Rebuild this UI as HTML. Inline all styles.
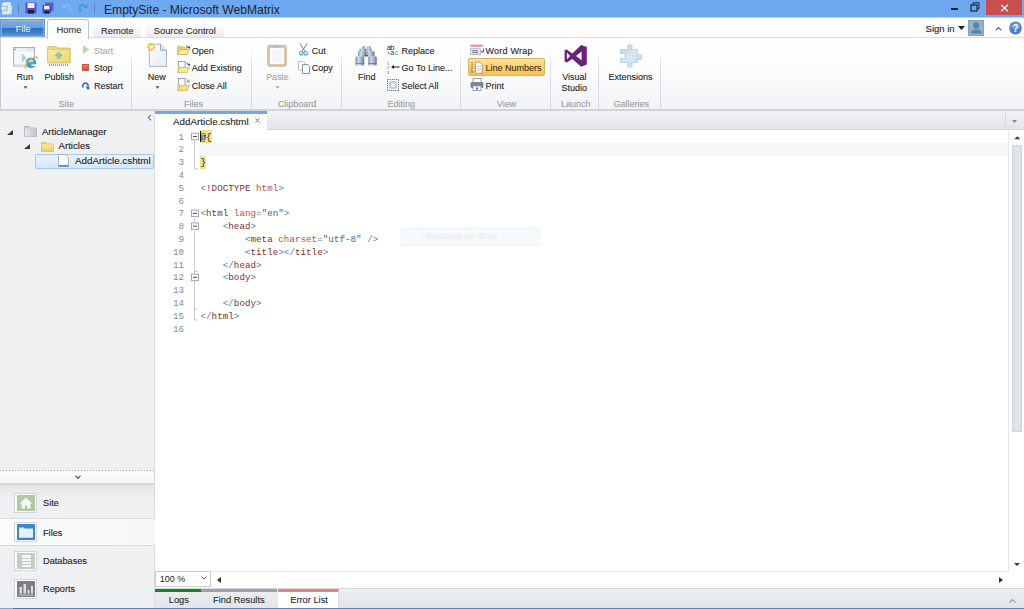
<!DOCTYPE html>
<html><head><meta charset="utf-8">
<style>
*{box-sizing:border-box}
html,body{margin:0;padding:0}
body{width:1024px;height:609px;overflow:hidden;position:relative;background:#fff;font-family:"Liberation Sans",sans-serif;color:#3b3b3b}
.a{position:absolute}
.t{position:absolute;white-space:nowrap;line-height:1}
svg{position:absolute;overflow:visible}
#title{left:0;top:0;width:1024px;height:19px;background:linear-gradient(#6ea8f0 0,#6ea8f0 17px,#a9c9f2 17px,#d9e7f8 19px)}
#tabrow{left:0;top:18px;width:1024px;height:20px;background:#fff}
#ribbon{left:0;top:37px;width:1024px;height:74px;background:linear-gradient(#fff 0%,#fcfcfd 45%,#f2f3f5 100%);border-top:1px solid #d9dcdf;border-bottom:2px solid #d0d3d7;border-left:1px solid #c9ccd1}
.sep{position:absolute;top:50px;width:1px;height:59px;background:linear-gradient(rgba(215,218,222,0),#dcdfe2 25%,#d6d9dd)}
.gl{position:absolute;top:100.2px;font-size:9px;color:#a0a3a7;-webkit-text-stroke:.15px currentColor;white-space:nowrap;line-height:1}
.rl{position:absolute;font-size:9px;color:#262626;-webkit-text-stroke:.1px currentColor;white-space:nowrap;line-height:1}
#left{left:0;top:111px;width:155px;height:497px;background:#eff0f2;border-right:1px solid #d8dadd}
#editor{left:155px;top:111px;width:869px;height:497px;background:#fff}
.code{position:absolute;left:200.5px;letter-spacing:.04px;font-family:"Liberation Mono",monospace;font-size:9.2px;line-height:12.8px;white-space:pre;color:#3b3b3b}
.ln{position:absolute;left:154px;font-family:"Liberation Mono",monospace;font-size:9.2px;line-height:12.8px;color:#7f8e9b;text-align:right;width:30px;white-space:pre}
.b{color:#4f7fc0}.n{color:#80302a}.at{color:#cc4c2c}.v{color:#3765ab}
.nav{position:absolute;left:14px;width:23px;height:20px;background:#fff;border:1px solid #d3d6da}
.navt{position:absolute;left:43px;font-size:9.2px;color:#222;-webkit-text-stroke:.1px currentColor;white-space:nowrap;line-height:1}
</style></head><body>

<!-- ============ Title bar ============ -->
<div id="title" class="a"></div>
<!-- app icon -->
<svg style="left:1px;top:2px" width="12" height="13" viewBox="0 0 12 13">
  <path d="M1 1.2Q1 0.4 2.5 0.4H9Q10 0.4 10 1.5V3.6L11 4V7.8L10.5 8.2V11.5Q10 12.6 8 12.6H3Q1 12.6 1 11.4V8.6L0.5 8V4.5L1 4.2z" fill="#dbe9ee"/>
  <path d="M1 4.5h6M1.5 8.3h5M6 4.5v4" stroke="#a6c0cf" stroke-width="1.2" fill="none"/>
  <path d="M2 1.2h7" stroke="#f4f9fb" stroke-width="1"/>
</svg>
<div class="a" style="left:18px;top:3px;width:2px;height:11px;background:linear-gradient(90deg,#5779ad,#8fb0d8)"></div>
<!-- save -->
<svg style="left:25px;top:2px" width="12" height="12" viewBox="0 0 12 12">
  <rect x="0.5" y="0.5" width="11" height="11" rx="1" fill="#5252c4"/>
  <rect x="2.5" y="1" width="7" height="5" fill="#eef0ff"/>
  <rect x="3" y="8" width="6" height="3.5" fill="#1c1c3a"/>
</svg>
<svg style="left:42px;top:2px" width="12" height="12" viewBox="0 0 12 12">
  <rect x="3" y="0.5" width="8.5" height="8.5" rx="1" fill="#5a5acc"/>
  <rect x="0.5" y="3" width="8.5" height="8.5" rx="1" fill="#4848b8"/>
  <rect x="2" y="3.8" width="5.5" height="3.5" fill="#eef0ff"/>
  <rect x="2.5" y="9" width="4.5" height="2.5" fill="#1c1c3a"/>
</svg>
<svg style="left:62px;top:3px" width="10" height="10" viewBox="0 0 10 10">
  <path d="M7 9 C10 6 8 1 4.5 2 L2 4" fill="none" stroke="#8cb6e6" stroke-width="1.6"/>
  <path d="M0.5 1v4h4z" fill="#8cb6e6"/>
</svg>
<svg style="left:78px;top:3px" width="10" height="10" viewBox="0 0 10 10">
  <path d="M3 9 C0 6 2 1 5.5 2 L8 4" fill="none" stroke="#3a9ad0" stroke-width="1.6"/>
  <path d="M9.5 1v4h-4z" fill="#3a9ad0"/>
</svg>
<div class="a" style="left:94px;top:3px;width:2px;height:11px;background:linear-gradient(90deg,#5779ad,#8fb0d8)"></div>
<div class="t" style="left:104px;top:4.3px;font-size:12.1px;color:#1c2633">EmptySite - Microsoft WebMatrix</div>
<!-- window controls -->
<div class="a" style="left:951px;top:8px;width:7px;height:2px;background:#1a2230"></div>
<svg style="left:970px;top:2px" width="10" height="10" viewBox="0 0 10 10">
  <rect x="1" y="3" width="6" height="6" fill="none" stroke="#1a2230" stroke-width="1.2"/>
  <path d="M3 2.5V0.8h6v6H7.5" fill="none" stroke="#1a2230" stroke-width="1"/>
</svg>
<div class="a" style="left:986px;top:0;width:36px;height:15px;background:#c94f4c"></div>
<svg style="left:1000px;top:4px" width="9" height="8" viewBox="0 0 9 8">
  <path d="M1.2 0.8l6.6 6.4M7.8 0.8L1.2 7.2" stroke="#fff" stroke-width="1.2"/>
</svg>

<!-- ============ Tab row ============ -->
<div id="tabrow" class="a"></div>
<div class="a" style="left:0;top:37px;width:1024px;height:1px;background:#d5d8dc"></div>
<div class="a" style="left:0;top:19px;width:45px;height:19px;background:linear-gradient(#80ade0 0%,#6a9ed9 45%,#2f72c1 50%,#3f7fc8 75%,#6ea2da 100%);border:1px solid #5f95d2;box-shadow:inset 0 0 0 1px rgba(170,200,235,.55)"></div>
<div class="t" style="left:15.8px;top:25.1px;font-size:9.2px;color:#f2f6fb">File</div>
<div class="a" style="left:93px;top:20px;width:48px;height:17px;background:linear-gradient(#fff 25%,#e9ebee)"></div>
<div class="a" style="left:146px;top:20px;width:78px;height:17px;background:linear-gradient(#fff 25%,#e9ebee)"></div>
<div class="a" style="left:47px;top:19px;width:42px;height:20px;background:#fff;border:1px solid #bfc3c8;border-bottom:none;border-radius:3px 3px 0 0;z-index:2"></div>
<div class="t" style="left:56.5px;top:26.4px;font-size:9.3px;color:#2e2e2e;-webkit-text-stroke:.1px currentColor;z-index:3">Home</div>
<div class="t" style="left:101px;top:26.5px;font-size:9.3px;color:#2e2e2e;-webkit-text-stroke:.1px currentColor">Remote</div>
<div class="t" style="left:153.8px;top:26.6px;font-size:9.3px;color:#2e2e2e;-webkit-text-stroke:.1px currentColor">Source Control</div>
<!-- sign in -->
<div class="t" style="left:925.6px;top:23.5px;font-size:9.5px;color:#2a2a2a;-webkit-text-stroke:.15px currentColor">Sign in</div>
<svg style="left:958px;top:26px" width="7" height="4" viewBox="0 0 7 4"><path d="M0 0h7L3.5 4z" fill="#222"/></svg>
<div class="a" style="left:968px;top:20px;width:16px;height:16px;background:#93b4ca;border:1px solid #7fa3bb"></div>
<svg style="left:969px;top:21px" width="14" height="14" viewBox="0 0 14 14">
  <ellipse cx="7.2" cy="4.6" rx="3.2" ry="3.4" fill="#5b86a6"/>
  <path d="M1.8 12.6C1.8 9.6 3.8 8.4 7.2 8.4S12.6 9.6 12.6 12.6z" fill="#5b86a6"/>
</svg>
<svg style="left:995px;top:26px" width="7" height="5" viewBox="0 0 7 5"><path d="M0.7 4.2L3.5 1.5 6.3 4.2" fill="none" stroke="#666" stroke-width="1.2"/></svg>
<svg style="left:1009px;top:21px" width="13" height="14" viewBox="0 0 13 14">
  <ellipse cx="6.5" cy="7" rx="6.3" ry="6.6" fill="#4f80c8"/>
  <ellipse cx="6.5" cy="5" rx="4.5" ry="3.5" fill="#7aa3dc" opacity=".6"/>
  <text x="6.5" y="10.8" font-family="Liberation Sans" font-weight="bold" font-size="10" fill="#fff" text-anchor="middle">?</text>
</svg>

<!-- ============ Ribbon ============ -->
<div id="ribbon" class="a"></div>
<div class="sep" style="left:131px"></div>
<div class="sep" style="left:251px"></div>
<div class="sep" style="left:341px"></div>
<div class="sep" style="left:460px"></div>
<div class="sep" style="left:550px"></div>
<div class="sep" style="left:598px"></div>
<div class="sep" style="left:660px"></div>

<div class="gl" style="left:58.4px">Site</div>
<div class="gl" style="left:184px">Files</div>
<div class="gl" style="left:277.8px">Clipboard</div>
<div class="gl" style="left:387.6px">Editing</div>
<div class="gl" style="left:496.8px">View</div>
<div class="gl" style="left:560.9px">Launch</div>
<div class="gl" style="left:613.5px">Galleries</div>

<!-- Run -->
<svg style="left:13px;top:46px" width="26" height="26" viewBox="0 0 26 26">
  <rect x="0.5" y="1.5" width="21" height="18.5" fill="#f7f8fa" stroke="#a9b1ba"/>
  <rect x="1" y="2" width="20" height="3" fill="#dfe4ea"/>
  <rect x="3" y="2.8" width="11" height="1.4" fill="#fff"/>
  <rect x="1.5" y="2.8" width="1.2" height="1.4" fill="#5aa8d8"/>
  <rect x="1" y="18" width="20" height="1.5" fill="#dfe4ea"/>
  <path d="M8.8 7.5L13.5 12 8.8 16.5z" fill="#a9d2e0"/>
  <circle cx="18" cy="16.8" r="5.3" fill="#3a9ddc"/>
  <ellipse cx="18.3" cy="15.6" rx="2.6" ry="1.5" fill="#fff"/>
  <rect x="15.6" y="15.5" width="5.4" height="1.2" fill="#3a9ddc"/>
  <path d="M18.5 18.3h5v1.6h-5z" fill="#fff"/>
  <path d="M11.8 21.5C13 16 18 11.5 23.6 10.8c1 .2 .8 1 .2 1.8" fill="none" stroke="#f2b51d" stroke-width="1.3"/>
  <path d="M11.8 21.5c.3 1 1 1.2 1.8 1" fill="none" stroke="#f2b51d" stroke-width="1"/>
</svg>
<div class="rl" style="left:16.5px;top:72.8px">Run</div>
<svg style="left:23px;top:86px" width="5" height="3" viewBox="0 0 5 3"><path d="M0.5 0.2h4L2.5 2.7z" fill="#555"/></svg>
<!-- Publish -->
<svg style="left:47px;top:46px" width="24" height="22" viewBox="0 0 24 22">
  <defs><linearGradient id="pf" x1="0" y1="0" x2="1" y2="1"><stop offset="0" stop-color="#f8eba8"/><stop offset="1" stop-color="#efd66c"/></linearGradient></defs>
  <path d="M0.6 1.2Q0.6 0.5 1.3 0.5H9.5L10.8 2H22.6Q23.2 2 23.2 2.6V16.6H0.6z" fill="#ecd680" stroke="#d6bd67" stroke-width=".8"/>
  <rect x="0.8" y="3.6" width="22.2" height="13" fill="url(#pf)" stroke="#d9c06a" stroke-width=".6"/>
  <path d="M11.6 6.2L8 9.6h2.2v2.6h3V9.6h2.2z" fill="#8fc7b9" stroke="#6fa79c" stroke-width=".5"/>
  <path d="M2 18.8h20" stroke="#8796bb" stroke-width="2.6" stroke-dasharray=".9 1.1"/>
</svg>
<div class="rl" style="left:44.4px;top:72.8px">Publish</div>
<!-- Start/Stop/Restart -->
<svg style="left:83px;top:45px" width="6" height="9" viewBox="0 0 6 9"><path d="M0.3 0.4l5.2 4.1L0.3 8.6z" fill="#b3dba5" stroke="#a6d197" stroke-width=".5" stroke-linejoin="round"/></svg>
<div class="rl" style="left:94px;top:46.7px;color:#a8abaf">Start</div>
<div class="a" style="left:82px;top:64px;width:7px;height:7px;background:linear-gradient(#e57a64,#d2503f);border:1px solid #cf5a48"></div>
<div class="rl" style="left:94px;top:64px">Stop</div>
<svg style="left:81px;top:81px" width="9" height="9" viewBox="0 0 9 9">
  <path d="M2.3 6.4A2.7 2.7 0 1 1 7 5.6" fill="none" stroke="#2f78c9" stroke-width="1.7"/>
  <path d="M4.7 5.4h3.6v3.2H6.2z" fill="#2f78c9"/>
</svg>
<div class="rl" style="left:94px;top:81.7px">Restart</div>

<!-- New -->
<svg style="left:147px;top:43px" width="21" height="25" viewBox="0 0 21 25">
  <defs><linearGradient id="pg" x1="0" y1="0" x2="1" y2="1"><stop offset="0" stop-color="#fdfdfe"/><stop offset="1" stop-color="#e6ebf3"/></linearGradient></defs>
  <path d="M2.3 1.2h11.2l6 6v16.2H2.3z" fill="url(#pg)" stroke="#a3aebc" stroke-width=".9"/>
  <path d="M13.5 1.2v6h6" fill="#dfe7f2" stroke="#8e9aab" stroke-width=".9"/>
  <circle cx="4.2" cy="3.9" r="2" fill="#fff6c0"/>
  <path d="M4.2 0v2.2M4.2 5.6v2.3M0 3.9h2.3M6.1 3.9h2.3M1.2 0.9l1.6 1.6M5.6 5.3l1.6 1.6M7.2 0.9L5.6 2.5M2.8 5.3L1.2 6.9" stroke="#f3c21d" stroke-width="1.5"/>
</svg>
<div class="rl" style="left:147.8px;top:72.8px">New</div>
<svg style="left:155px;top:86px" width="5" height="3" viewBox="0 0 5 3"><path d="M0.5 0.2h4L2.5 2.7z" fill="#555"/></svg>
<!-- Open/Add/Close -->
<svg style="left:177px;top:45px" width="14" height="10" viewBox="0 0 14 10">
  <path d="M0.5 1.2h4l1 1h4.5v7.3H0.5z" fill="#e8cf72" stroke="#cdb050" stroke-width=".7"/>
  <path d="M0.5 9.5l2.3-5h9.7l-2.4 5z" fill="#f7e7a2" stroke="#cdb050" stroke-width=".7"/>
  <path d="M9.2 0.6l2.6 2.2" stroke="#27467e" stroke-width="1"/><path d="M13 4l-0.2-2.8-2.6.8z" fill="#27467e"/>
</svg>
<div class="rl" style="left:191.8px;top:46.7px">Open</div>
<svg style="left:177px;top:61px" width="14" height="12" viewBox="0 0 14 12">
  <rect x="1.5" y="0.5" width="6.5" height="8" fill="#fff" stroke="#8090a8" stroke-width=".8"/>
  <path d="M0.5 4.5h2.5v7H0.5z" fill="#e8cf72"/>
  <path d="M0.5 11.5l2.3-5h9.7l-2.4 5z" fill="#f7e7a2" stroke="#cdb050" stroke-width=".7"/>
  <path d="M9.5 1.8l2.3 2" stroke="#27467e" stroke-width="1"/><path d="M13 5.2l-0.2-2.8-2.6.8z" fill="#27467e"/>
</svg>
<div class="rl" style="left:191.8px;top:64px">Add Existing</div>
<svg style="left:177px;top:78px" width="14" height="13" viewBox="0 0 14 13">
  <rect x="1.5" y="0.5" width="6.5" height="8.5" fill="#fff" stroke="#8090a8" stroke-width=".8"/>
  <path d="M0.5 5h2.5v7.5H0.5z" fill="#e8cf72"/>
  <path d="M0.5 12.5l2.3-5.2h9.7l-2.4 5.2z" fill="#f3df8a" stroke="#cdb050" stroke-width=".7"/>
  <path d="M9.5 1.5l2.5 2.5M12 1.5v2.5H9.5" fill="none" stroke="#7a8ca6" stroke-width=".9"/>
</svg>
<div class="rl" style="left:191.8px;top:81.7px">Close All</div>

<!-- Paste -->
<svg style="left:267px;top:43px" width="20" height="24" viewBox="0 0 20 24">
  <rect x="0.8" y="2.5" width="18.4" height="20.7" rx="1.5" fill="#dcc6a6" stroke="#cdb594"/>
  <rect x="3" y="5" width="14" height="16" fill="#fbfcfd"/>
  <path d="M5 8h10M5 10.5h10M5 13h10M5 15.5h10M5 18h10" stroke="#e4e8ee" stroke-width=".8"/>
  <path d="M5 4.2L7 2h2.2l.8-1.2.8 1.2H13l2 2.2z" fill="#b9bdc3"/>
</svg>
<div class="rl" style="left:266.3px;top:72.9px;color:#a3a6aa;font-size:8.7px">Paste</div>
<svg style="left:275px;top:86px" width="5" height="3" viewBox="0 0 5 3"><path d="M0.5 0.2h4L2.5 2.7z" fill="#a0a3a7"/></svg>
<!-- Cut / Copy -->
<svg style="left:299px;top:43px" width="9" height="13" viewBox="0 0 9 13">
  <path d="M1 0.5l5 8M8 0.5l-5 8" stroke="#6c7580" stroke-width=".9"/>
  <circle cx="2.3" cy="10.3" r="1.8" fill="none" stroke="#3f9ae0" stroke-width="1.1"/>
  <circle cx="6.7" cy="10.3" r="1.8" fill="none" stroke="#3f9ae0" stroke-width="1.1"/>
</svg>
<div class="rl" style="left:311.7px;top:46.7px">Cut</div>
<svg style="left:298px;top:61px" width="12" height="13" viewBox="0 0 12 13">
  <path d="M0.5 0.5h5l1.5 1.5v7H0.5z" fill="#fff" stroke="#a9b0b8" stroke-width=".8"/>
  <path d="M4.5 3.5h5l2 2v7h-7z" fill="#fff" stroke="#7b8692" stroke-width=".9"/>
</svg>
<div class="rl" style="left:311.7px;top:64px">Copy</div>

<!-- Find -->
<svg style="left:355px;top:45px" width="23" height="22" viewBox="0 0 23 22">
  <defs><linearGradient id="bn" x1="0" x2="1"><stop offset="0" stop-color="#7f90a8"/><stop offset=".35" stop-color="#d2dbe6"/><stop offset=".7" stop-color="#9aaac0"/><stop offset="1" stop-color="#66789a"/></linearGradient></defs>
  <g fill="url(#bn)">
    <rect x="6.8" y="0.9" width="3.2" height="3.2" rx="1.2"/>
    <rect x="12.2" y="0.9" width="3.5" height="3.2" rx="1.2"/>
    <rect x="4.4" y="3.6" width="6.9" height="3" rx="1"/>
    <rect x="11.3" y="3.6" width="5.4" height="3" rx="1"/>
    <rect x="2.9" y="6.3" width="8.5" height="5.2" rx=".8"/>
    <rect x="11.1" y="6.3" width="8.5" height="5.2" rx=".8"/>
    <rect x="0.4" y="11.2" width="8.9" height="9.4" rx="1.5"/>
    <rect x="13.2" y="11.2" width="8.6" height="9.4" rx="1.5"/>
  </g>
  <path d="M0.8 18.5h8.2M13.6 18.5h8" stroke="#5d6f8c" stroke-width="1.2" opacity=".7"/>
  <path d="M9.3 10.6h3.9" stroke="#556783" stroke-width="1.4"/>
</svg>
<div class="rl" style="left:358px;top:72.8px">Find</div>

<!-- Replace / GoTo / SelectAll -->
<svg style="left:387px;top:43px" width="13" height="13" viewBox="0 0 13 13">
  <text x="-0.3" y="6.8" font-family="Liberation Sans" font-size="7.5" fill="#2a2a2a" letter-spacing="-.6">ab</text>
  <text x="3.2" y="12.2" font-family="Liberation Sans" font-size="7" fill="#1f3f7a" letter-spacing="-.6">a</text>
  <text x="7.4" y="12.2" font-family="Liberation Sans" font-size="7" fill="#2aa8d8">c</text>
  <path d="M0.5 9l2.3 2.2" stroke="#1f3f7a" stroke-width=".9"/>
</svg>
<div class="rl" style="left:401.6px;top:46.7px">Replace</div>
<svg style="left:387px;top:61px" width="13" height="13" viewBox="0 0 13 13">
  <text x="0" y="4" font-family="Liberation Sans" font-size="4" fill="#555">1</text>
  <text x="0" y="8" font-family="Liberation Sans" font-size="4" fill="#555">2</text>
  <text x="0" y="12.5" font-family="Liberation Sans" font-size="4" fill="#555">3</text>
  <path d="M12.5 6H5" stroke="#222" stroke-width="1"/><path d="M4 6l3-2v4z" fill="#222"/>
</svg>
<div class="rl" style="left:401.6px;top:64px">Go To Line...</div>
<svg style="left:387px;top:79px" width="12" height="12" viewBox="0 0 12 12">
  <rect x="0.5" y="0.5" width="11" height="11" fill="none" stroke="#555" stroke-width=".9" stroke-dasharray="1.2 1"/>
  <rect x="3" y="3" width="6" height="6" fill="#e3edf7" stroke="#8ea4bb" stroke-width=".9"/>
</svg>
<div class="rl" style="left:401.6px;top:81.7px">Select All</div>

<!-- View -->
<svg style="left:470px;top:44px" width="15" height="12" viewBox="0 0 15 12">
  <path d="M0.5 0.5h11l2.5 1.3-2.5 1.3h-11z" fill="#e99aa2"/>
  <rect x="0.7" y="4.8" width="9.6" height="5.8" fill="#f7f8fa" stroke="#a3abb4" stroke-width=".9"/>
  <path d="M2.2 6.8h6M2.2 8.7h6" stroke="#4a5563" stroke-width=".9"/>
  <path d="M13.5 4.5v3.3h-2.3" fill="none" stroke="#2a7ad0" stroke-width="1.1"/>
  <path d="M10.8 7.8l1.6-1.3v2.6z" fill="#2a7ad0"/>
</svg>
<div class="rl" style="left:485.4px;top:46.7px;letter-spacing:.25px">Word Wrap</div>
<div class="a" style="left:468px;top:58px;width:77px;height:18px;border:1px solid #ddb458;border-radius:2px;background:linear-gradient(#fde39b,#fbd073 45%,#f8c252)"></div>
<svg style="left:471px;top:61px" width="12" height="14" viewBox="0 0 12 14">
  <text x="-0.3" y="3.6" font-family="Liberation Sans" font-size="4.2" fill="#3a3a3a">1</text>
  <text x="-0.3" y="8" font-family="Liberation Sans" font-size="4.2" fill="#3a3a3a">2</text>
  <text x="-0.3" y="12.4" font-family="Liberation Sans" font-size="4.2" fill="#3a3a3a">5</text>
  <path d="M4.5 1.2h4.2l2.4 2.4v8.6H4.5z" fill="#fbfbfc" stroke="#8a929c" stroke-width=".8"/>
  <path d="M6 5.5h3.8M6 7.5h3.8M6 9.5h3.8" stroke="#b3b8bf" stroke-width=".6"/>
</svg>
<div class="rl" style="left:485.4px;top:64px;color:#3a3220">Line Numbers</div>
<svg style="left:470px;top:78px" width="14" height="13" viewBox="0 0 14 13">
  <rect x="3" y="0.5" width="8" height="4" fill="#fff" stroke="#8a929c" stroke-width=".8"/>
  <rect x="0.5" y="4" width="13" height="6" rx="1.5" fill="#7d8794"/>
  <rect x="3" y="8" width="8" height="4.5" fill="#fff" stroke="#8a929c" stroke-width=".8"/>
  <rect x="6" y="9.5" width="2" height="2" fill="#2a7ad0"/>
</svg>
<div class="rl" style="left:485.4px;top:81.7px">Print</div>

<!-- Visual Studio -->
<svg style="left:564px;top:44px" width="24" height="24" viewBox="0 0 24 24">
  <path d="M0.6 6.1L2.6 5.4 8.3 9.5 17.2 0.9 22.8 2.9V20.6L17.2 22.8 8.3 15 2.6 18.4 0.6 17.4z M2.9 8.6V15.2L6.1 12z M12 12L17.6 16.2V7.6z" fill="#68227c" fill-rule="evenodd"/>
</svg>
<div class="rl" style="left:562.2px;top:72.8px">Visual</div>
<div class="rl" style="left:561.5px;top:83.7px">Studio</div>

<!-- Extensions -->
<svg style="left:620px;top:44px" width="22" height="24" viewBox="0 0 22 24">
  <defs><linearGradient id="pz" x1="0" y1="0" x2="1" y2="1"><stop offset="0" stop-color="#bcd6e8"/><stop offset=".5" stop-color="#d7e8f3"/><stop offset="1" stop-color="#bfd7e8"/></linearGradient></defs>
  <path d="M0.6 5.6H8.3C8.3 4.5 7.4 4 7.4 3C7.4 1.5 8.5 0.6 9.8 0.6C11.1 0.6 12.2 1.5 12.2 3C12.2 4 11.3 4.5 11.3 5.6H17.4V11.2C18.5 11.2 19 10.4 20 10.4C21.2 10.4 21.6 11.8 21.6 13C21.6 14.2 21.2 15.6 20 15.6C19 15.6 18.5 14.8 17.4 14.8V18.6H11.3C11.3 19.7 12.2 20.2 12.2 21C12.2 22.4 11.1 23.2 9.8 23.2C8.5 23.2 7.4 22.4 7.4 21C7.4 20.2 8.3 19.7 8.3 18.6H0.6V14.2C2 14.2 2.6 15 3.6 15C4.8 15 5.2 13.6 5.2 12.1C5.2 10.6 4.8 9.2 3.6 9.2C2.6 9.2 2 10 0.6 10Z" fill="url(#pz)" stroke="#a9c8dc" stroke-width=".8"/>
</svg>
<div class="rl" style="left:608.5px;top:72.8px">Extensions</div>

<!-- ============ Left panel ============ -->
<div id="left" class="a"></div>
<svg style="left:146.5px;top:113.5px" width="5" height="7" viewBox="0 0 5 7"><path d="M4 0.8L1.3 3.5 4 6.2" fill="none" stroke="#8a8e93" stroke-width="1.3"/></svg>
<svg style="left:7px;top:130px" width="6" height="5" viewBox="0 0 6 5"><path d="M6 0v5H0z" fill="#3a3a3a"/></svg>
<svg style="left:24px;top:126px" width="13" height="11" viewBox="0 0 13 11">
  <path d="M0.5 0.5h5l1 1.5h6v8.5H0.5z" fill="#d2d4d8" stroke="#a9adb3" stroke-width=".8"/>
  <rect x="0.8" y="2.5" width="11.5" height="8" fill="url(#gf)"/>
  <defs><linearGradient id="gf" x1="0" x2="1"><stop offset="0" stop-color="#e9eaec"/><stop offset="1" stop-color="#bfc2c7"/></linearGradient></defs>
</svg>
<div class="t" style="left:41.9px;top:127.1px;font-size:9.6px;color:#1f1f1f;-webkit-text-stroke:.12px currentColor">ArticleManager</div>
<svg style="left:24px;top:144px" width="6" height="5" viewBox="0 0 6 5"><path d="M6 0v5H0z" fill="#3a3a3a"/></svg>
<svg style="left:41px;top:142px" width="13" height="10" viewBox="0 0 13 10">
  <path d="M0.5 0.5h4.5l1 1.5h6.5v7.5H0.5z" fill="#eccf6a" stroke="#d7b74e" stroke-width=".8"/>
  <defs><linearGradient id="yf" x1="0" y1="0" x2="0" y2="1"><stop offset="0" stop-color="#faeaa6"/><stop offset="1" stop-color="#ebcb5a"/></linearGradient></defs><rect x="0.8" y="2.5" width="11.5" height="7" fill="url(#yf)"/>
</svg>
<div class="t" style="left:58.6px;top:140.7px;font-size:9.6px;color:#1f1f1f;-webkit-text-stroke:.12px currentColor">Articles</div>
<div class="a" style="left:35px;top:154px;width:119px;height:15px;border:1px solid #a7c9ee;border-radius:2px;background:linear-gradient(#eaf3fc,#d6e7f8)"></div>
<svg style="left:58px;top:154px" width="11" height="13" viewBox="0 0 11 13">
  <path d="M0.5 0.5h7l3 3v9H0.5z" fill="#fafbfc" stroke="#9aa3ad" stroke-width=".8"/>
  <rect x="0.5" y="11" width="10" height="1.5" fill="#3f8fd4"/>
</svg>
<div class="t" style="left:75px;top:155.6px;font-size:9.8px;color:#1f1f1f;-webkit-text-stroke:.12px currentColor">AddArticle.cshtml</div>

<!-- bottom of left: nav -->
<div class="a" style="left:0;top:471px;width:154px;height:12px;background:linear-gradient(#fdfdfd,#f3f4f5)"></div>
<div class="a" style="left:0;top:470px;width:154px;height:1px;background:repeating-linear-gradient(90deg,#a9acb0 0 1px,transparent 1px 3px)"></div>
<svg style="left:75px;top:474.5px" width="6" height="5" viewBox="0 0 6 5"><path d="M0.6 0.8L3 3.4l2.4-2.6" fill="none" stroke="#5a5a5a" stroke-width="1.3"/></svg>
<div class="a" style="left:0;top:483px;width:154px;height:2px;background:#d5d7da"></div>
<div class="a" style="left:0;top:485px;width:154px;height:33px;background:linear-gradient(#e5e6e8,#eeeff1 40%,#eff0f2)"></div>
<div class="a" style="left:0;top:518px;width:155px;height:1px;background:#dcdee1"></div>
<div class="a" style="left:0;top:519px;width:155px;height:26px;background:linear-gradient(90deg,#fbfbfc,#f6f7f8)"></div>
<div class="a" style="left:0;top:545px;width:155px;height:1px;background:#d6d8db"></div>

<div class="nav" style="top:493px"></div>
<svg style="left:17px;top:495px" width="18" height="16" viewBox="0 0 18 16">
  <rect width="18" height="16" fill="#aecaa5"/>
  <path d="M9 2.5L2.5 8.5h2v5h3.5v-3h2v3h3.5v-5h2z" fill="#f4f7f3"/>
</svg>
<div class="navt" style="top:499.3px">Site</div>
<div class="nav" style="top:522px"></div>
<svg style="left:17px;top:524px" width="18" height="16" viewBox="0 0 18 16">
  <rect width="18" height="16" fill="#3a86cc"/>
  <path d="M2 3.5h5l1 1h8v9H2z" fill="#d6e8f7"/>
  <rect x="2" y="5" width="14" height="8.5" fill="#e6f1fb"/>
</svg>
<div class="navt" style="top:528.6px">Files</div>
<div class="nav" style="top:551px"></div>
<svg style="left:17px;top:553px" width="18" height="16" viewBox="0 0 18 16">
  <rect width="18" height="16" fill="#c3ccc9"/>
  <rect x="5" y="2" width="9" height="12" fill="#f5f7f6"/>
  <path d="M5 5.5h9M5 8.5h9M5 11.5h9" stroke="#c3ccc9" stroke-width="1"/>
</svg>
<div class="navt" style="top:556.9px">Databases</div>
<div class="nav" style="top:579px"></div>
<svg style="left:17px;top:581px" width="18" height="16" viewBox="0 0 18 16">
  <rect width="18" height="16" fill="#7b7f84"/>
  <path d="M2.5 6h2.5v6.5H2.5zM6.5 3h2.5v9.5H6.5zM10.5 9h2v3.5h-2zM14 5h2v7.5h-2z" fill="#dcdee0"/>
  <rect x="1.5" y="13.5" width="15" height="1" fill="#c9cbce"/>
</svg>
<div class="navt" style="top:585.3px">Reports</div>

<!-- ============ Editor ============ -->
<div id="editor" class="a"></div>
<!-- tab strip -->
<div class="a" style="left:155px;top:111px;width:869px;height:19px;background:linear-gradient(#f1f2f4,#e3e5e8);border-bottom:1px solid #d3d6da"></div>
<div class="a" style="left:1005px;top:111px;width:1px;height:19px;background:#d6d9dd"></div>
<svg style="left:1012px;top:120px" width="5" height="3" viewBox="0 0 5 3"><path d="M0 0h5L2.5 3z" fill="#888"/></svg>
<div class="a" style="left:155px;top:111px;width:112px;height:20px;background:#fff;border-top:3px solid #78a9d6"></div>
<div class="t" style="left:173px;top:116.9px;font-size:9.8px;color:#2a2a2a;-webkit-text-stroke:.12px currentColor">AddArticle.cshtml</div>
<svg style="left:255px;top:118px" width="5" height="5" viewBox="0 0 5 5"><path d="M0.5 0.5l4 4M4.5 0.5l-4 4" stroke="#666" stroke-width=".9"/></svg>

<!-- code area border & scrollbar -->
<div class="a" style="left:1008px;top:130px;width:1px;height:441px;background:#e4e6e9"></div>
<div class="a" style="left:155px;top:571px;width:854px;height:1px;background:#e3e5e8"></div>
<svg style="left:1013.5px;top:136px" width="7" height="4" viewBox="0 0 7 4"><path d="M0.3 3.3h6L3.3 0.3z" fill="#3a3a3a"/></svg>
<div class="a" style="left:1012px;top:145px;width:10px;height:287px;background:linear-gradient(90deg,#dcdfe4,#e3e6ea 50%,#dde1e5);border:1px solid #d3d7dc"></div>
<svg style="left:1014px;top:562.5px" width="6" height="4" viewBox="0 0 6 4"><path d="M0 0h6L3 3z" fill="#3a3a3a"/></svg>

<!-- highlights -->
<div class="a" style="left:199px;top:143px;width:809px;height:13px;background:#f6f6f6"></div>
<div class="a" style="left:200px;top:130px;width:12px;height:13px;background:#f1e08f"></div>
<div class="a" style="left:200px;top:156px;width:6px;height:13px;background:#f1e08f"></div>
<div class="a" style="left:200px;top:131px;width:1px;height:11px;background:#111"></div>

<!-- Rectangular snip ghost -->
<div class="a" style="left:401px;top:228px;width:139px;height:18px;background:#f7fafd;border:1px solid #eef4fa"></div>
<div class="a" style="left:423px;top:229px;width:1px;height:16px;background:#f1f5fa"></div>
<div class="t" style="left:426.5px;top:231.7px;font-size:9.2px;color:#e9eaec">Rectangular Snip</div>

<!-- line numbers -->
<div class="ln" style="top:131.7px">1
2
3
4
5
6
7
8
9
10
11
12
13
14
15
16</div>

<!-- fold markers -->
<svg style="left:190px;top:131.7px" width="12" height="200" viewBox="0 0 12 200">
  <g stroke="#c9cbce" stroke-width="1" fill="none">
    <path d="M4.5 9.0V36.9H8"/>
    <path d="M4.5 85.8V91.6"/>
    <path d="M4.5 98.6V188.0H8M4.5 139.3H8M4.5 177.2H7"/>
  </g>
  <g fill="#fff" stroke="#a2a6ab" stroke-width="1">
    <rect x="1.5" y="1.3" width="7" height="6.5"/>
    <rect x="1.5" y="78.1" width="7" height="6.5"/>
    <rect x="1.5" y="90.9" width="7" height="6.5"/>
    <rect x="1.5" y="142.1" width="7" height="6.5"/>
  </g>
  <g stroke="#4a4a4a" stroke-width="1">
    <path d="M3 4.55h4"/>
    <path d="M3 81.35h4"/>
    <path d="M3 94.15h4"/>
    <path d="M3 145.35h4"/>
  </g>
</svg>

<div class="code" style="top:131.7px"><span style="color:#222">@{</span>

<span style="color:#222">}</span>

<span class="b">&lt;</span><span class="n">!DOCTYPE</span> <span class="at">html</span><span class="b">&gt;</span>

<span class="b">&lt;</span><span class="n">html</span> <span class="at">lang</span><span class="b">=</span><span class="v">"en"</span><span class="b">&gt;</span>
    <span class="b">&lt;</span><span class="n">head</span><span class="b">&gt;</span>
        <span class="b">&lt;</span><span class="n">meta</span> <span class="at">charset</span><span class="b">=</span><span class="v">"utf-8"</span> <span class="b">/&gt;</span>
        <span class="b">&lt;</span><span class="n">title</span><span class="b">&gt;&lt;/</span><span class="n">title</span><span class="b">&gt;</span>
    <span class="b">&lt;/</span><span class="n">head</span><span class="b">&gt;</span>
    <span class="b">&lt;</span><span class="n">body</span><span class="b">&gt;</span>

    <span class="b">&lt;/</span><span class="n">body</span><span class="b">&gt;</span>
<span class="b">&lt;/</span><span class="n">html</span><span class="b">&gt;</span>
</div>

<!-- zoom bar -->
<div class="a" style="left:155px;top:572px;width:869px;height:16px;background:#fff"></div>
<div class="a" style="left:155px;top:571px;width:56px;height:16px;background:#fff;border:1px solid #c9ccd0"></div>
<div class="t" style="left:159.8px;top:574.8px;font-size:9px;color:#222">100 %</div>
<svg style="left:201px;top:576px" width="6" height="4" viewBox="0 0 6 4"><path d="M0.5 0.5L3 3l2.5-2.5" fill="none" stroke="#666" stroke-width="1"/></svg>
<svg style="left:217px;top:577px" width="4" height="6" viewBox="0 0 4 6"><path d="M4 0v6L0 3z" fill="#333"/></svg>
<svg style="left:999px;top:577px" width="4" height="6" viewBox="0 0 4 6"><path d="M0 0v6l4-3z" fill="#333"/></svg>

<!-- bottom tabs -->
<div class="a" style="left:155px;top:588px;width:869px;height:20px;background:linear-gradient(#eceef0,#e3e5e8);border-top:1px solid #d5d8dc"></div>
<div class="a" style="left:155px;top:589px;width:46px;height:3px;background:#118a1c"></div>
<div class="a" style="left:201px;top:589px;width:76px;height:3px;background:#9ba2aa"></div>
<div class="a" style="left:278px;top:589px;width:61px;height:19px;background:#fff;border-top:3px solid #e88080;border-right:1px solid #d8dbde"></div>
<div class="t" style="left:168.75px;top:596.1px;font-size:9.3px;color:#2a2a2a;-webkit-text-stroke:.1px currentColor">Logs</div>
<div class="t" style="left:213px;top:596.1px;font-size:9.3px;color:#2a2a2a;-webkit-text-stroke:.1px currentColor">Find Results</div>
<div class="t" style="left:290.2px;top:596.1px;font-size:9.3px;color:#2a2a2a;-webkit-text-stroke:.1px currentColor">Error List</div>
<svg style="left:1009px;top:598px" width="7" height="5" viewBox="0 0 7 5"><path d="M0.5 4.5L3.5 1.5 6.5 4.5" fill="none" stroke="#999" stroke-width="1.2"/></svg>

<!-- bottom border -->
<div class="a" style="left:0;top:608px;width:1024px;height:1px;background:linear-gradient(90deg,#7fa6d2 0,#7fa6d2 13px,#4a76aa 13px,#4a76aa 60px,#5a84b6 60px)"></div>

</body></html>
